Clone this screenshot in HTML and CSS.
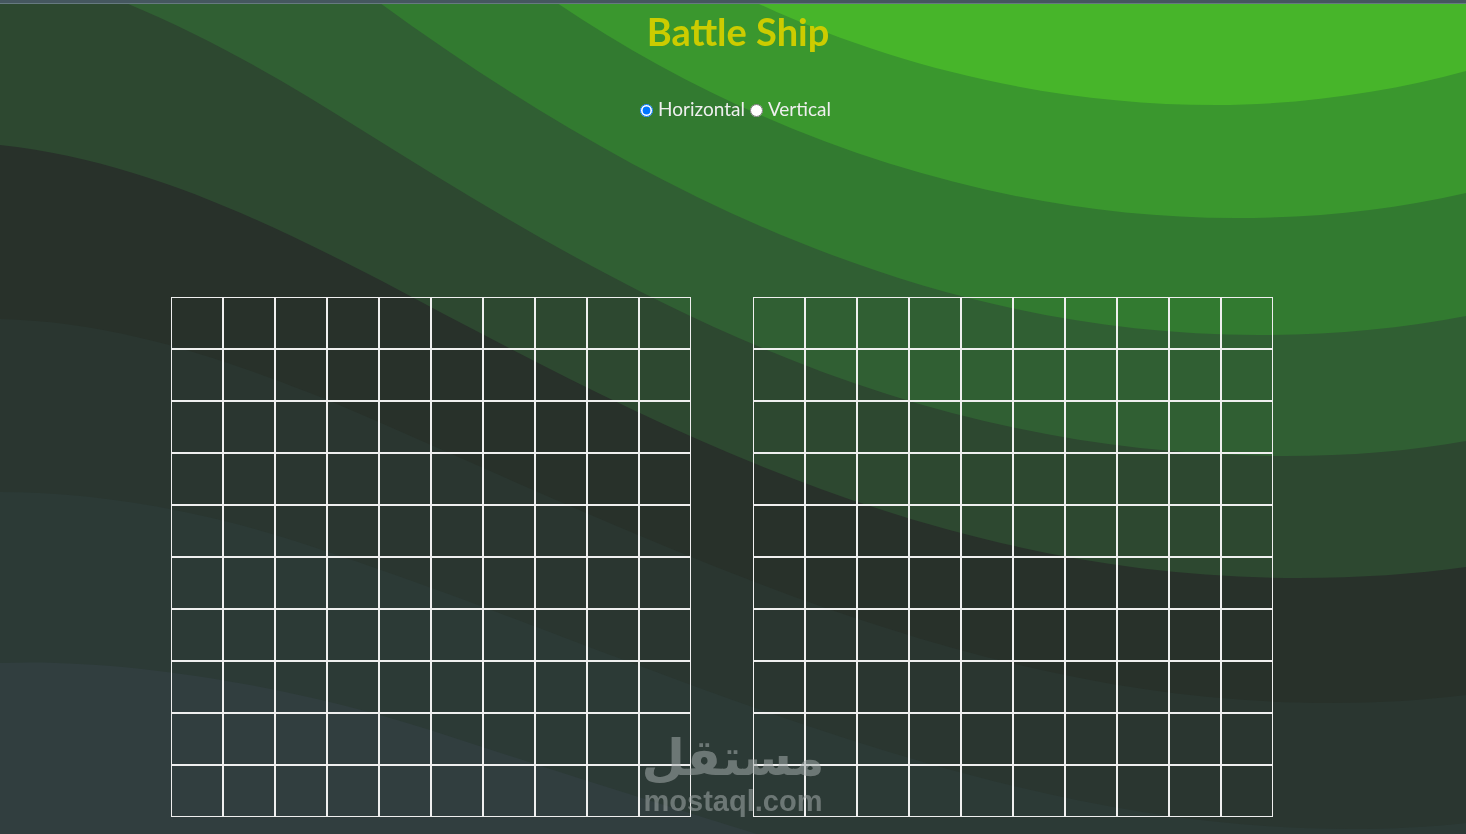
FILE: index.html
```html
<!DOCTYPE html>
<html lang="en">
<head>
    <meta charset="UTF-8">
    <meta name="viewport" content="width=device-width, initial-scale=1.0">
    <title>Battle Ship</title>
    <link rel="stylesheet" href="styles.css">
</head>
<body>

    <!-- Background waves -->
    <svg class="waves" viewBox="0 0 1466 834" preserveAspectRatio="none" aria-hidden="true">
        <rect width="1466" height="834" fill="#47b52a"/>
        <path fill="#3a972e" d="M757 3C900 70 1060 105 1216 105C1300 105 1390 92 1466 71V834H0V3Z"/>
        <path fill="#327a30" d="M557 3C760 140 1000 218 1235 218C1320 218 1390 210 1466 193V834H0V3Z"/>
        <path fill="#305f33" d="M380 3C620 178 915 335 1258 335C1330 335 1400 329 1466 316V834H0V3Z"/>
        <path fill="#2d4830" d="M126 3C215 40 290 85 357 127C620 292 900 456 1285 456C1350 456 1410 451 1466 441V834H0V3Z"/>
        <path fill="#28312a" d="M0 145C140 160 265 221 380 280C640 418 930 578 1300 578C1360 578 1415 574 1466 567V834H0Z"/>
        <path fill="#2a3630" d="M0 319C130 322 245 368 323 398C640 533 960 703 1330 703C1380 703 1425 700 1466 695V834H0Z"/>
        <path fill="#2c3a36" d="M0 492C120 492 240 520 337 555C640 655 980 829 1350 829C1390 829 1430 827 1466 823V834H0Z"/>
        <path fill="#313e3f" d="M0 663C130 658 300 688 430 730C540 766 650 801 757 834H0Z"/>
    </svg>

    <div class="topbar"></div>

    <h1 class="title">Battle Ship</h1>

    <div class="direction">
        <input type="radio" name="direction" id="horizontal" value="horizontal" checked>
        <label for="horizontal">Horizontal</label>
        <input type="radio" name="direction" id="vertical" value="vertical">
        <label for="vertical">Vertical</label>
    </div>

    <div class="boards">
        <div class="board" id="playerBoard"></div>
        <div class="board" id="enemyBoard"></div>
    </div>

    <div class="watermark">
        <span class="watermark-ar" lang="ar" dir="rtl">مستقل</span>
        <span class="watermark-en">mostaql.com</span>
    </div>

    <script>
        const size = 10;

        function createBoard(id) {
            const board = document.getElementById(id);
            for (let i = 0; i < size * size; i++) {
                const cell = document.createElement('div');
                cell.className = 'cell';
                cell.dataset.index = i;
                board.appendChild(cell);
            }
        }

        createBoard('playerBoard');
        createBoard('enemyBoard');
    </script>
</body>
</html>
```
FILE: styles.css
```css
* {
    box-sizing: border-box;
}

body {
    margin: 0;
    font-family: Lato, "Open Sans", sans-serif;
    background-color: #28312a;
    color: #efefef;
}

.waves {
    position: fixed;
    top: 0;
    left: 0;
    width: 100%;
    height: 100%;
    z-index: -1;
}

.topbar {
    height: 4px;
    background-color: #45575f;
    border-bottom: 1px solid #667a80;
}

.title {
    margin: 4px 0 0;
    padding-left: 10px;
    font-size: 38px;
    line-height: 46px;
    text-align: center;
    color: #cccc00;
}

.direction {
    display: flex;
    justify-content: center;
    align-items: center;
    margin-top: 42px;
    font-size: 19px;
    line-height: 26px;
}

.direction input {
    margin: 3px 5px 0 5px;
}

.boards {
    display: flex;
    justify-content: center;
    gap: 62px;
    margin-top: 175px;
    padding-right: 22px;
}

.board {
    display: grid;
    grid-template-columns: repeat(10, 52px);
    grid-auto-rows: 52px;
}

.cell {
    border: 1px solid #efefef;
}

.watermark {
    position: fixed;
    left: 0;
    right: 0;
    bottom: 18px;
    display: flex;
    flex-direction: column;
    align-items: center;
    color: #a3a9a9;
    opacity: 0.55;
    font-weight: bold;
    pointer-events: none;
}

.watermark-ar {
    font-family: "DejaVu Sans", sans-serif;
    font-size: 50px;
    line-height: 56px;
}

.watermark-en {
    font-family: "Liberation Sans", sans-serif;
    font-size: 29px;
    line-height: 30px;
}
```
